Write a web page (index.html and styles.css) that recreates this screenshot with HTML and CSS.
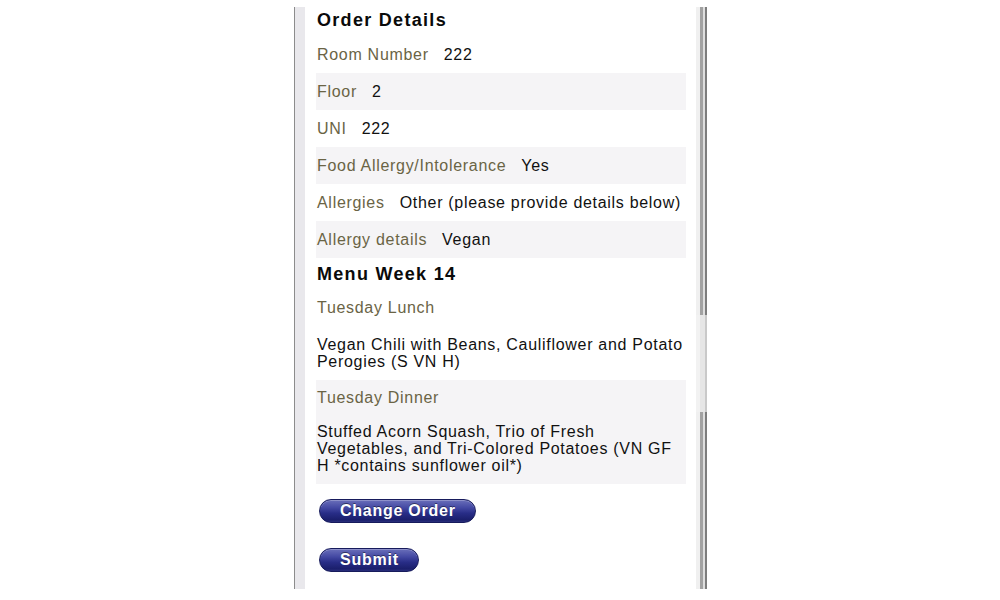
FILE: index.html
```html
<!DOCTYPE html>
<html>
<head>
<meta charset="utf-8">
<link rel="stylesheet" href="styles.css">
</head>
<body>
<div class="frame">
  <div class="left-edge"></div>
  <div class="content">
    <h2 class="title title-first">Order Details</h2>
    <div class="row"><span class="label">Room Number</span><span class="value">222</span></div>
    <div class="row alt"><span class="label">Floor</span><span class="value">2</span></div>
    <div class="row"><span class="label">UNI</span><span class="value">222</span></div>
    <div class="row alt"><span class="label">Food Allergy/Intolerance</span><span class="value">Yes</span></div>
    <div class="row"><span class="label">Allergies</span><span class="value">Other (please provide details below)</span></div>
    <div class="row alt"><span class="label">Allergy details</span><span class="value">Vegan</span></div>
    <h2 class="title title-menu">Menu Week 14</h2>
    <div class="meal meal-lunch">
      <div class="label">Tuesday Lunch</div>
      <div class="meal-text">Vegan Chili with Beans, Cauliflower and Potato<br>Perogies (S VN H)</div>
    </div>
    <div class="meal alt">
      <div class="label">Tuesday Dinner</div>
      <div class="meal-text">Stuffed Acorn Squash, Trio of Fresh<br>Vegetables, and Tri-Colored Potatoes (VN GF<br>H *contains sunflower oil*)</div>
    </div>
    <div class="actions">
      <button class="btn" type="button">Change Order</button>
      <button class="btn" type="button">Submit</button>
    </div>
  </div>
  <div class="scroll">
    <div class="seg seg-top"></div>
    <div class="seg-gap"></div>
    <div class="seg seg-bottom"></div>
  </div>
</div>
</body>
</html>
```

FILE: styles.css
```css
html, body {
  margin: 0;
  padding: 0;
  background: #ffffff;
}

body {
  font-family: "Liberation Sans", Arial, Helvetica, sans-serif;
  color: #111111;
}

.frame {
  display: flex;
  margin: 7px 0 0 294px;
  width: 413px;
  height: 582px;
  overflow: hidden;
}

.left-edge {
  width: 11px;
  flex: none;
  box-sizing: border-box;
  border-left: 1px solid #8c8c8c;
  background: #e9e8ec;
}

.content {
  width: 391px;
  flex: none;
  box-sizing: border-box;
  padding: 0 10px 0 11px;
  background: #ffffff;
}

.title {
  margin: 0;
  padding-left: 1px;
  font-size: 18px;
  font-weight: bold;
  letter-spacing: 1.3px;
  line-height: 20px;
  color: #0a0a0a;
}

.title-first {
  padding-top: 3px;
  padding-bottom: 6px;
}

.title-menu {
  padding-top: 6px;
  padding-bottom: 6px;
}

.row {
  display: flex;
  align-items: center;
  gap: 15px;
  height: 37px;
  padding-left: 1px;
  font-size: 16px;
  letter-spacing: 0.7px;
}

.alt {
  background: #f5f4f6;
}

.label {
  color: #6a6445;
}

.value {
  color: #111111;
}

.meal {
  padding: 9px 0 10px 1px;
  font-size: 16px;
  letter-spacing: 0.7px;
  line-height: 17px;
}

.meal-text {
  margin-top: 17px;
  white-space: nowrap;
  color: #111111;
}

.meal-lunch .meal-text {
  margin-top: 20px;
}

.actions {
  display: flex;
  flex-direction: column;
  align-items: flex-start;
  gap: 25px;
  padding: 15px 0 0 3px;
}

.btn {
  height: 24px;
  box-sizing: border-box;
  padding: 0 19px 0 20px;
  border: 1px solid #171b5c;
  border-radius: 12px;
  background: linear-gradient(to bottom, #6a6fba 0%, #4449a3 35%, #282d87 60%, #1b1f6c 90%, #2a2f7c 100%);
  color: #ffffff;
  font-family: "Liberation Sans", Arial, Helvetica, sans-serif;
  font-size: 16px;
  font-weight: bold;
  letter-spacing: 0.75px;
  line-height: 22px;
  text-shadow: 0 -1px 0 rgba(0, 0, 0, 0.45);
  box-shadow: inset 0 1px 0 rgba(255, 255, 255, 0.25);
}

.scroll {
  width: 11px;
  flex: none;
  display: flex;
  flex-direction: column;
}

.seg {
  background: linear-gradient(to right, #f0f0f0 0, #f0f0f0 4px, #a2a2a2 4px, #a2a2a2 7px, #dedede 7px, #dedede 9px, #7d7d7d 9px, #7d7d7d 11px);
}

.seg-top {
  height: 308px;
}

.seg-gap {
  height: 97px;
  background: linear-gradient(to right, #f2f2f2 0, #f2f2f2 4px, #e6e6e6 4px, #e6e6e6 9px, #c9c9c9 9px, #c9c9c9 11px);
}

.seg-bottom {
  flex: 1;
}
```
